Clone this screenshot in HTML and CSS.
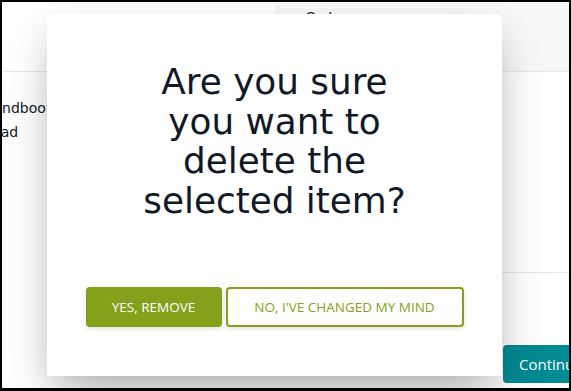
FILE: index.html
```html
<!DOCTYPE html>
<html lang="en">
<head>
    <meta charset="UTF-8">
    <meta name="viewport" content="width=device-width, initial-scale=1.0">
    <title>Delete item</title>
    <link rel="stylesheet" href="styles.css">
</head>
<body>
    <div class="frame">
        <div class="page">
            <div class="main-col">
                <div class="top-bar"></div>
                <div class="doc-list">
                    <div class="doc-item">Handbook</div>
                    <div class="doc-item">Read</div>
                </div>
            </div>
            <div class="side-col">
                <div class="side-head">Order summary</div>
                <div class="side-body"></div>
                <div class="side-foot">
                    <button class="continue-btn">Continue</button>
                </div>
            </div>
        </div>

        <div class="modal">
            <h1 class="modal-title">Are you sure you want to delete the selected item?</h1>
            <div class="modal-actions">
                <button class="btn btn-primary">Yes, remove</button>
                <button class="btn btn-outline">No, I've changed my mind</button>
            </div>
        </div>
    </div>
</body>
</html>
```

FILE: styles.css
```css
* {
    box-sizing: border-box;
}

html, body {
    margin: 0;
    padding: 0;
    background: #000;
}

.frame {
    position: relative;
    width: 571px;
    height: 391px;
    border: 2px solid #000;
    border-bottom-width: 3px;
    background: #fff;
    overflow: hidden;
    font-family: 'DejaVu Sans', sans-serif;
}

.page {
    display: flex;
    height: 100%;
}

.main-col {
    width: 273px;
    flex-shrink: 0;
    background: #fff;
}

.top-bar {
    height: 70px;
    border-bottom: 1px solid #e5e7eb;
}

.doc-list {
    margin-left: -19px;
    padding-top: 24px;
    font-size: 14px;
    line-height: 24px;
    color: #111827;
}

.side-col {
    flex: 1;
    display: flex;
    flex-direction: column;
    background: #f6f7f9;
}

.side-head {
    height: 70px;
    padding: 8px 0 0 30px;
    font-size: 15px;
    color: #111827;
    border-bottom: 1px solid #e5e7eb;
}

.side-body {
    height: 201px;
    border-bottom: 1px solid #e5e7eb;
    background: #fff;
}

.side-foot {
    display: flex;
    justify-content: flex-end;
    padding-top: 72px;
    background: #fff;
    flex: 1;
}

.continue-btn {
    margin-right: -40px;
    width: 106px;
    height: 38px;
    border: none;
    border-radius: 4px;
    background: #008a93;
    color: #fff;
    font-family: 'Open Sans', sans-serif;
    font-size: 15px;
    text-align: left;
    padding-left: 16px;
}

.modal {
    position: absolute;
    left: 45px;
    top: 12px;
    width: 455px;
    height: 362px;
    background: #fff;
    border-radius: 0 6px 0 0;
    box-shadow: 0 25px 50px -12px rgba(0, 0, 0, 0.3), 0 10px 30px rgba(0, 0, 0, 0.08);
    display: flex;
    flex-direction: column;
    align-items: center;
    padding-top: 48px;
}

.modal-title {
    margin: 0;
    width: 290px;
    text-align: center;
    font-size: 35.8px;
    line-height: 39.5px;
    font-weight: normal;
    color: #111827;
}

.modal-actions {
    display: flex;
    gap: 4px;
    margin-top: 67px;
}

.btn {
    height: 40px;
    border-radius: 4px;
    font-family: 'Open Sans', sans-serif;
    font-size: 13.5px;
    text-transform: uppercase;
    box-shadow: 0 2px 4px rgba(0, 0, 0, 0.12);
    cursor: pointer;
}

.btn-primary {
    width: 136px;
    border: none;
    background: #83a11a;
    color: #fff;
}

.btn-outline {
    width: 238px;
    border: 2px solid #83a11a;
    background: #fff;
    color: #83a11a;
}
```
